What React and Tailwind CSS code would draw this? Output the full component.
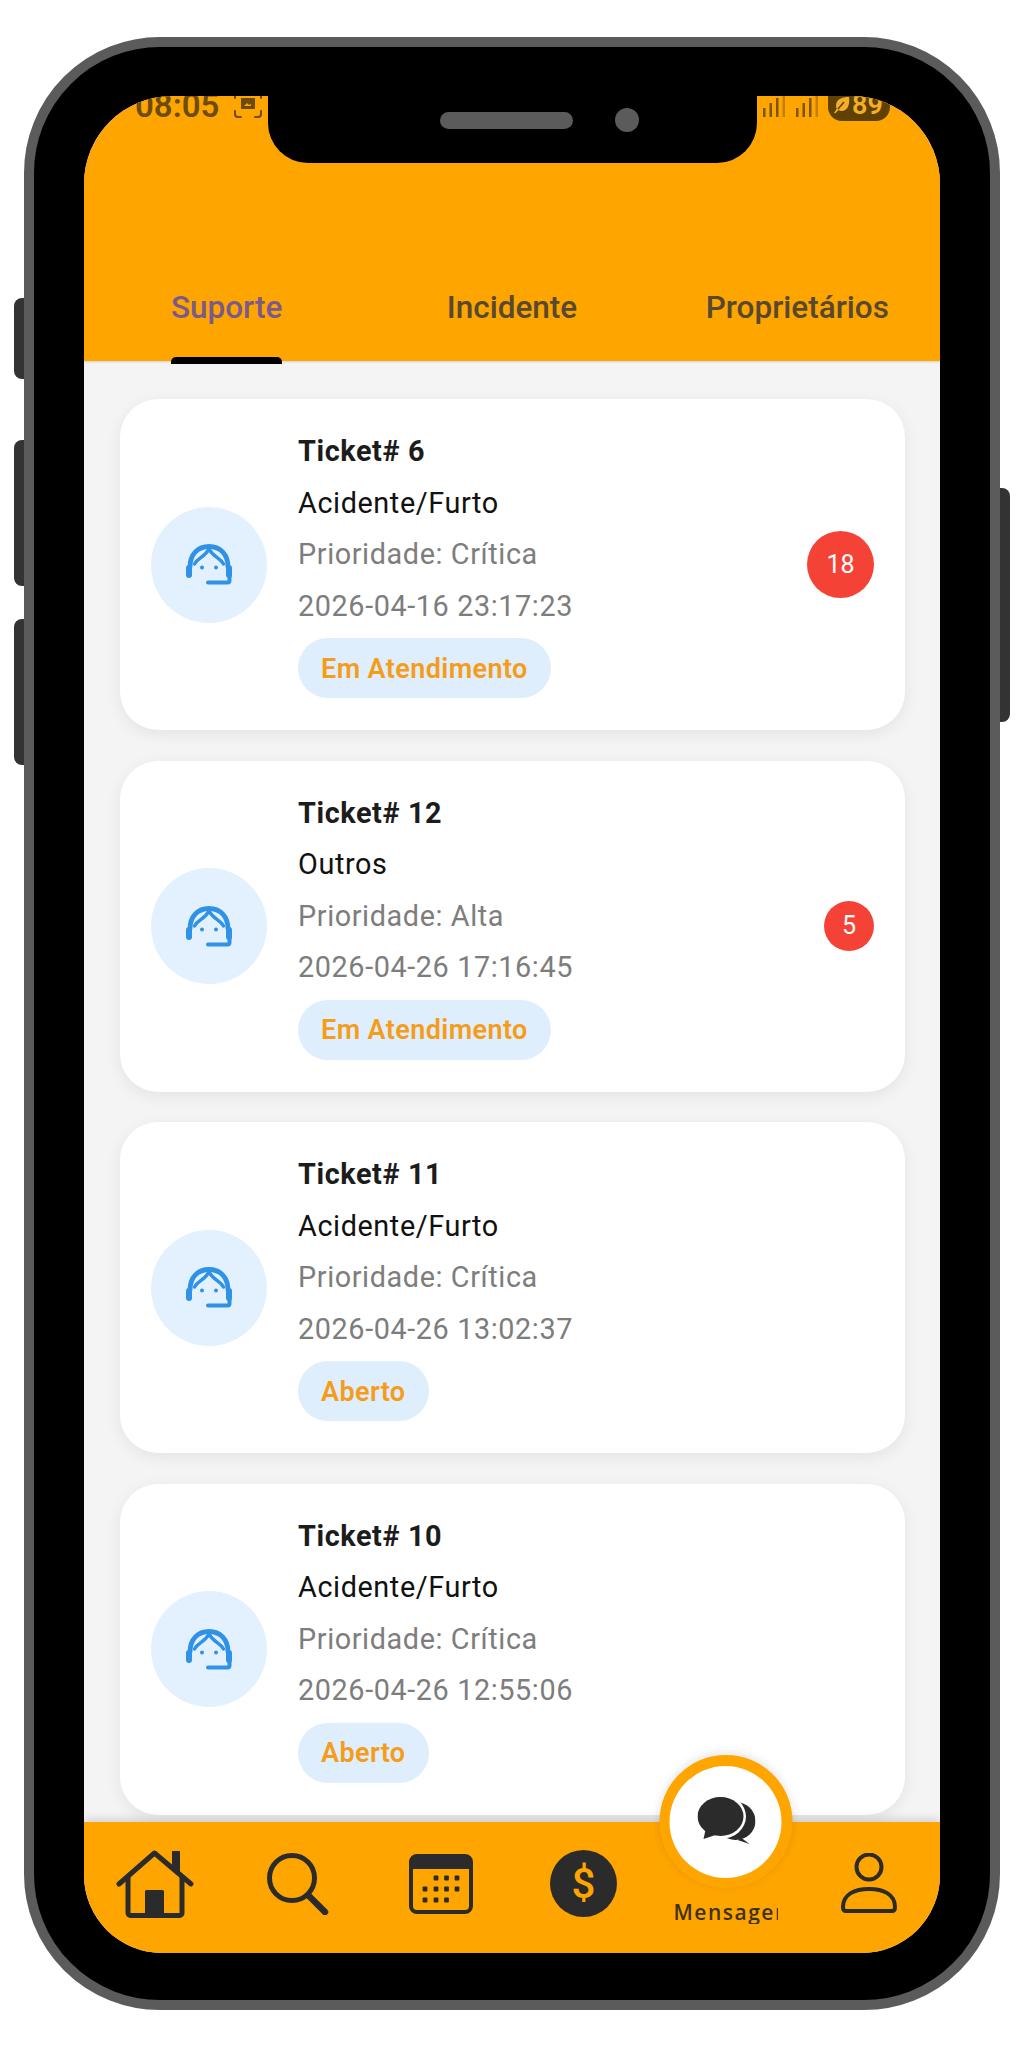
const tickets = [
  { id: 6, cat: "Acidente/Furto", pri: "Crítica", date: "2026-04-16 23:17:23", status: "Em Atendimento", badge: "18", big: true },
  { id: 12, cat: "Outros", pri: "Alta", date: "2026-04-26 17:16:45", status: "Em Atendimento", badge: "5" },
  { id: 11, cat: "Acidente/Furto", pri: "Crítica", date: "2026-04-26 13:02:37", status: "Aberto" },
  { id: 10, cat: "Acidente/Furto", pri: "Crítica", date: "2026-04-26 12:55:06", status: "Aberto" },
];

function AgentIcon() {
  return (
    <svg width="46" height="41" viewBox="0 0 46 41" fill="none" stroke="#2f92e6" strokeLinecap="round">
      <path d="M4 23C4 10 12 2.500 23 2.500S42 10 42 23" strokeWidth="4.800" />
      <path d="M8.500 20C12 13.500 19 13 23 5 27 13 34 13.500 37.500 20" strokeWidth="3.400" strokeLinejoin="round" />
      <rect x="0" y="21" width="6" height="13" rx="3" fill="#2f92e6" stroke="none" />
      <rect x="40" y="21" width="6" height="13" rx="3" fill="#2f92e6" stroke="none" />
      <circle cx="16" cy="23.500" r="2" fill="#2f92e6" stroke="none" />
      <circle cx="30" cy="23.500" r="2" fill="#2f92e6" stroke="none" />
      <path d="M43.500 32v4.500c0 1-.500 2-2 2H22" strokeWidth="4" />
    </svg>
  );
}

function TicketCard({ t }) {
  return (
    <div className="flex h-[331px] shrink-0 rounded-[38px] bg-white px-[31px] shadow-[0_4px_16px_rgba(0,0,0,0.07)]">
      <div className="flex h-[116px] w-[116px] shrink-0 items-center justify-center self-center rounded-full bg-[#e2f1fd]">
        <AgentIcon />
      </div>
      <div className="ml-[31px] flex flex-1 flex-col items-start pt-[27px] text-[28.800px] leading-[51.500px] tracking-[0.6px]">
        <div className="font-bold text-[#1c1c1c]">Ticket# {t.id}</div>
        <div className="text-[#111111]">{t.cat}</div>
        <div className="text-[#7d7d7d]">Prioridade: {t.pri}</div>
        <div className="text-[#7d7d7d]">{t.date}</div>
        <div className="mt-[6px] flex h-[60px] items-center rounded-full bg-[#deeefc] px-[23px] pt-[3px] text-[27px] font-semibold tracking-[0.4px] text-[#f59c1a]">
          {t.status}
        </div>
      </div>
      {t.badge && (
        <div
          className={
            t.big
              ? "flex h-[67px] w-[67px] shrink-0 items-center justify-center self-center rounded-full bg-[#f44336] text-[25px] text-white"
              : "flex h-[50px] w-[50px] shrink-0 items-center justify-center self-center rounded-full bg-[#f44336] text-[25px] text-white"
          }
        >
          {t.badge}
        </div>
      )}
    </div>
  );
}

function HomeIcon() {
  return (
    <svg width="78" height="68" viewBox="0 0 78 68" fill="none" stroke="#2b2b2b" strokeLinecap="round" strokeLinejoin="round">
      <path d="M3 34 38.500 3 75 34" strokeWidth="5" />
      <path d="M12 27v36a2.500 2.500 0 0 0 2.500 2.500h49a2.500 2.500 0 0 0 2.500-2.500V27" strokeWidth="5" />
      <rect x="29" y="40" width="19" height="26" rx="1.500" fill="#2b2b2b" stroke="none" />
      <path d="M56 1h8v22l-8-7Z" fill="#2b2b2b" stroke="none" />
    </svg>
  );
}

function SearchIcon() {
  return (
    <svg width="62" height="62" viewBox="0 0 62 62" fill="none" stroke="#2b2b2b" strokeLinecap="round">
      <circle cx="25" cy="25" r="22.500" strokeWidth="5" />
      <path d="M42 43 58 59" strokeWidth="6.500" />
    </svg>
  );
}

function CalendarIcon() {
  const dots = [
    [27, 24], [37.500, 24], [48, 24],
    [16, 35], [27, 35], [37.500, 35], [48, 35],
    [16, 46], [27, 46], [37.500, 46],
  ];
  return (
    <svg width="64" height="60" viewBox="0 0 64 60" fill="none">
      <rect x="2" y="2" width="60" height="56" rx="6" stroke="#2b2b2b" strokeWidth="4" />
      <path d="M2 15V8a6 6 0 0 1 6-6h48a6 6 0 0 1 6 6v7Z" fill="#2b2b2b" />
      {dots.map(([x, y]) => (
        <rect key={`${x}-${y}`} x={x - 2.400} y={y - 2.400} width="4.800" height="4.800" rx="1" fill="#2b2b2b" />
      ))}
    </svg>
  );
}

function UserIcon() {
  return (
    <svg width="58" height="61" viewBox="0 0 58 61" fill="none" stroke="#2b2b2b" strokeWidth="4" strokeLinejoin="round">
      <circle cx="29" cy="14" r="12.500" />
      <path d="M3 54C3 41 15 36 29 36s26 5 26 18c0 3-1 4-3 4H6c-2 0-3-1-3-4Z" />
    </svg>
  );
}

function ChatIcon() {
  return (
    <svg width="58" height="48" viewBox="0 0 58 48">
      <path d="M44 41 52 47 40 43Z" fill="#2b2b2b" />
      <ellipse cx="38" cy="24" rx="20" ry="19" fill="#2b2b2b" />
      <ellipse cx="23" cy="19.500" rx="25.500" ry="22.500" fill="#ffffff" />
      <path d="M8 33 6 42 18 38Z" fill="#2b2b2b" />
      <ellipse cx="23" cy="19.500" rx="23" ry="19.500" fill="#2b2b2b" />
    </svg>
  );
}

function NavCell({ children }) {
  return <div className="flex h-[131px] items-center justify-center pb-[8px]">{children}</div>;
}

function SignalBars() {
  return (
    <svg width="56" height="22" viewBox="0 0 56 22" fill="#7a5510">
      <rect x="0" y="12" width="2.500" height="9" />
      <rect x="6.500" y="7" width="2.500" height="14" />
      <rect x="13" y="2" width="2.500" height="19" />
      <rect x="19.500" y="0" width="2.500" height="21" opacity="0.45" />
      <rect x="33" y="12" width="2.500" height="9" />
      <rect x="39.500" y="7" width="2.500" height="14" />
      <rect x="46" y="2" width="2.500" height="19" />
      <rect x="52.500" y="0" width="2.500" height="21" opacity="0.45" />
    </svg>
  );
}

export default function App() {
  return (
    <div className="h-[2048px] w-[1024px] bg-white pl-[24px] pt-[37px] font-[Roboto,sans-serif]">
      <div className="relative h-[1973px] w-[976px] rounded-[136px] border-[10px] border-[#5b5b5b] bg-black pl-[50px] pt-[49px]">
        <div className="absolute -left-[20px] top-[251px] h-[81px] w-[10px] rounded-l-[8px] bg-[#333333]" />
        <div className="absolute -left-[20px] top-[393px] h-[146px] w-[10px] rounded-l-[8px] bg-[#333333]" />
        <div className="absolute -left-[20px] top-[572px] h-[146px] w-[10px] rounded-l-[8px] bg-[#333333]" />
        <div className="absolute -right-[20px] top-[441px] h-[234px] w-[10px] rounded-r-[8px] bg-[#333333]" />

        <div className="relative flex h-[1857px] w-[856px] flex-col overflow-hidden rounded-[88px] rounded-b-[78px] bg-[#f4f4f4]">
          {/* notch */}
          <div className="absolute left-[184px] top-0 z-20 flex h-[67px] w-[489px] items-start rounded-b-[40px] bg-black pl-[172px] pt-[16px]">
            <div className="mt-0 h-[17px] w-[133px] rounded-full bg-[#5b5b5b]" />
            <div className="ml-[42px] -mt-[4px] h-[24px] w-[24px] rounded-full bg-[#5b5b5b]" />
          </div>

          {/* header */}
          <div className="flex h-[265px] shrink-0 flex-col justify-between bg-[#ffa500] shadow-[0_1px_2px_rgba(0,0,0,0.15)]">
            <div className="flex h-[28px] items-start overflow-hidden pl-[51px] pr-[50px]">
              <span className="-mt-px text-[33px] font-semibold leading-[22px] text-[#6d4c0b]">08:05</span>
              <svg className="ml-[15px]" width="28" height="22" viewBox="0 0 28 22" fill="none" stroke="#6d4c0b" strokeWidth="2" strokeLinecap="round">
                <path d="M1 15v3a3 3 0 0 0 3 3h3M21 21h3a3 3 0 0 0 3-3v-3M1 0v2M27 0v2" />
                <path d="M8 3h12v9H8Z" fill="#6d4c0b" />
                <path d="M10 10l3-3 2 2 2-1v2h-7Z" fill="#ffa500" stroke="none" />
              </svg>
              <div className="ml-auto flex items-start">
                <SignalBars />
                <div className="ml-[9px] flex h-[25px] w-[62px] items-end rounded-b-[14px] bg-[#5f4100] pb-[7px] pl-[5px]">
                  <svg width="18" height="18" viewBox="0 0 18 18" fill="#f5ae2b">
                    <path d="M16 1C9 1 3 3 3 10c0 1 .300 2 .800 2.800L1 17l1 .500 3.500-3.500C6.500 14.700 7.500 15 8.500 15 15 15 17 8 16 1Z" />
                    <path d="M5 13 11 6" stroke="#5f4100" strokeWidth="1.500" fill="none" />
                  </svg>
                  <span className="ml-[1px] text-[27px] font-semibold leading-[18px] text-[#f5ae2b]">89</span>
                </div>
              </div>
            </div>
            <div className="grid h-[70px] grid-cols-3 text-[31.500px] font-medium">
              <div className="flex justify-center">
                <div className="flex flex-col items-center justify-between">
                  <span className="mt-[1px] leading-[32px] text-[#7a5a8c]">Suporte</span>
                  <span className="-mb-[3px] h-[7px] w-full rounded-t-[5px] bg-black" />
                </div>
              </div>
              <div className="mt-[1px] flex justify-center leading-[32px] text-[#57482f]">Incidente</div>
              <div className="mt-[1px] flex justify-center leading-[32px] text-[#57482f]">Proprietários</div>
            </div>
          </div>

          {/* list */}
          <div className="flex min-h-0 flex-1 flex-col gap-[30.500px] overflow-hidden pl-[36px] pr-[35px] pt-[38px]">
            {tickets.map((t) => (
              <TicketCard key={t.id} t={t} />
            ))}
          </div>

          {/* bottom nav */}
          <div className="relative z-10 grid h-[131px] shrink-0 grid-cols-6 bg-[#ffa500] shadow-[0_-3px_8px_rgba(0,0,0,0.14)]">
            <NavCell><HomeIcon /></NavCell>
            <NavCell><SearchIcon /></NavCell>
            <NavCell><CalendarIcon /></NavCell>
            <NavCell>
              <div className="flex h-[67px] w-[67px] items-center justify-center rounded-full bg-[#2b2b2b] text-[42px] font-medium leading-none text-[#ffa500]">
                $
              </div>
            </NavCell>
            <div className="relative flex h-[131px] flex-col items-center justify-end pb-[29px]">
              <div className="absolute -top-[67px] left-1/2 flex h-[133px] w-[133px] -translate-x-1/2 items-center justify-center rounded-full bg-[#ffa500] shadow-[0_-2px_10px_rgba(0,0,0,0.12)]">
                <div className="flex h-[112px] w-[112px] items-center justify-center rounded-full bg-white pb-[2px] pl-[2px]">
                  <ChatIcon />
                </div>
              </div>
              <div className="w-[105px] overflow-hidden whitespace-nowrap font-['Open_Sans',sans-serif] text-[21px] font-semibold leading-[24px] tracking-[1.500px] text-[#3f3215]">
                Mensagem
              </div>
            </div>
            <NavCell><UserIcon /></NavCell>
          </div>
        </div>
      </div>
    </div>
  );
}
